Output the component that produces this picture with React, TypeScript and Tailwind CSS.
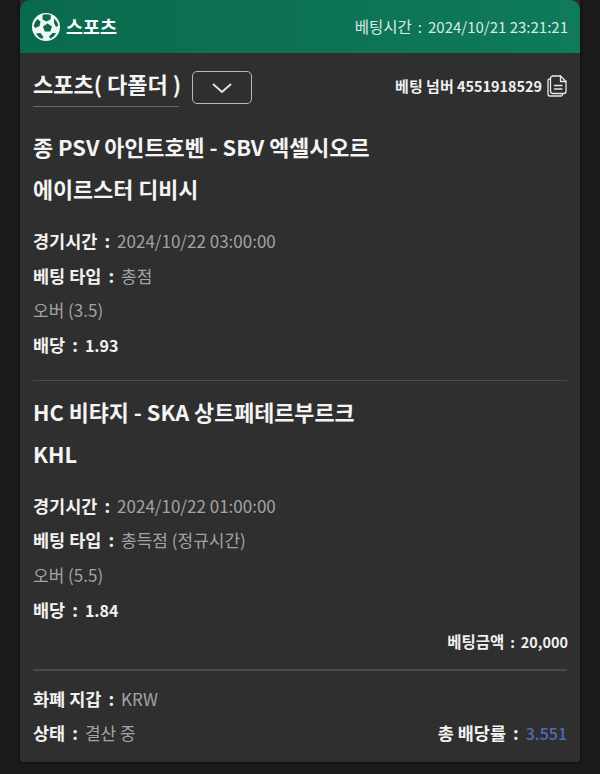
const font = "[font-family:'Noto_Sans_CJK_KR','Noto_Sans',sans-serif]";

function SoccerIcon() {
  return (
    <svg width="30" height="30" viewBox="0 0 30 30">
      <circle cx="15" cy="15" r="14" fill="#eef7f3" />
      <g fill="#0b6a4e">
        <polygon points="16.5,11.5 21,14.5 19.3,19.5 13.7,19.5 12,14.5" />
        <path d="M11.5 3 Q16 1.6 20 3.2 L19.5 7.5 L15.5 9.5 L11.5 7.5 Z" />
        <path d="M6.5 7 L9.5 9.5 L8.5 14 L4.5 16 L2.6 14 Q3 10 6.5 7 Z" />
        <path d="M23 6.5 Q26.5 9.5 27.4 13.5 L25 15 L23 11 Z" />
        <path d="M5 21.5 L9.5 21 L12.5 25 L11 27 Q7 25.5 5 21.5 Z" />
        <path d="M25 21 Q23.5 25 19.5 26.8 L18 24.5 L21.5 21 Z" />
      </g>
    </svg>
  );
}

function CopyIcon() {
  return (
    <svg width="20" height="22" viewBox="0 0 20 22" fill="none" stroke="#e8e8e8" strokeWidth="1.3" strokeLinejoin="round" strokeLinecap="round">
      <path d="M3.5 4 H2.5 A1.5 1.5 0 0 0 1 5.5 V19 A2 2 0 0 0 3 21 H14 A1.5 1.5 0 0 0 15.5 19.5" />
      <path d="M6 1 H13.5 L19 6.5 V16.5 A2 2 0 0 1 17 18.5 H6 A2.5 2.5 0 0 1 3.5 16 V3.5 A2.5 2.5 0 0 1 6 1 Z" />
      <path d="M13.5 1 V6.5 H19" />
      <path d="M7.5 10.5 H15 M7.5 14 H15" />
    </svg>
  );
}

function Row({ label, value, valueClass = "text-[17px] text-[#a3a3a3]" }: { label: string; value?: string; valueClass?: string }) {
  return (
    <div className="h-[34.67px] leading-[34.67px] text-[17.5px] whitespace-nowrap">
      <span className="font-bold text-[#f2f2f2]">{label}<span className="mx-[7px]">:</span></span>
      {value && <span className={valueClass}>{value}</span>}
    </div>
  );
}

function Game({ title, league, time, type, pick, odds }: { title: string; league: string; time: string; type: string; pick: string; odds: string }) {
  return (
    <div>
      <div className="text-[21.8px] font-semibold leading-[42px] text-[#f4f4f4] whitespace-nowrap">
        <div>{title}</div>
        <div>{league}</div>
      </div>
      <div className="mt-[14px]">
        <Row label="경기시간" value={time} />
        <Row label="베팅 타입" value={type} />
        <div className="h-[34.67px] leading-[34.67px] text-[17px] text-[#a3a3a3]">{pick}</div>
        <Row label="배당" value={odds} valueClass="text-[16px] font-bold text-[#f2f2f2]" />
      </div>
    </div>
  );
}

export default function App() {
  return (
    <div className={`${font} w-[600px] h-[774px] bg-[#1c1c1c] px-5 overflow-hidden`}>
      <div className="h-[762px] bg-[#2f2f2f] rounded-b-[3px] shadow-[0_0_6px_rgba(0,0,0,0.6)]">
        <div className="h-[53px] rounded-t-[10px] bg-gradient-to-r from-[#0a6a4d] to-[#0f7a5c] flex items-center justify-between pl-[11px] pr-3">
          <div className="flex items-center gap-[5px]">
            <SoccerIcon />
            <span className="text-[18.5px] font-bold text-white">스포츠</span>
          </div>
          <div className="text-[15px] text-[#d8ebe4]"><span className="text-[15.5px]">베팅시간</span><span className="mx-[6px]">:</span>2024/10/21 23:21:21</div>
        </div>

        <div className="px-[13px]">
          <div className="flex items-start justify-between pt-[14px]">
            <div className="flex items-start gap-[13px]">
              <div className="w-[146px] h-[40px] border-b border-[#6a6a6a] text-[22px] font-bold leading-[32px] text-[#f4f4f4] whitespace-nowrap">
                스포츠( 다폴더 )
              </div>
              <div className="w-[60px] h-[33px] mt-[4px] flex items-center justify-center rounded-[5px] border border-[#b8b8b8]">
                <svg width="22" height="12" viewBox="0 0 22 12" fill="none" stroke="#e4e4e4" strokeWidth="2">
                  <path d="M2 2 L11 10 L20 2" />
                </svg>
              </div>
            </div>
            <div className="flex items-center gap-[5px] mt-[8px] text-[15px] font-semibold text-[#f0f0f0]">
              <span>베팅 넘버 <span className="text-[14.4px]">4551918529</span></span>
              <CopyIcon />
            </div>
          </div>

          <div className="pt-[19px] pb-[17px] border-b border-[#4d4d4d]">
            <Game
              title="종 PSV 아인트호벤 - SBV 엑셀시오르"
              league="에이르스터 디비시"
              time="2024/10/22 03:00:00"
              type="총점"
              pick="오버 (3.5)"
              odds="1.93"
            />
          </div>

          <div className="pt-[10px]">
            <Game
              title="HC 비탸지 - SKA 상트페테르부르크"
              league="KHL"
              time="2024/10/22 01:00:00"
              type="총득점 (정규시간)"
              pick="오버 (5.5)"
              odds="1.84"
            />
          </div>

          <div className="text-right text-[14.4px] font-semibold text-[#f0f0f0] leading-[29px] mr-[-1px]"><span className="text-[15.5px]">베팅금액</span><span className="mx-[6px]">:</span>20,000</div>

          <div className="mt-[12.5px] border-t-2 border-[#4a4a4a] pt-[11px]">
            <Row label="화폐 지갑" value="KRW" />
            <div className="flex justify-between">
              <Row label="상태" value="결산 중" />
              <Row label="총 배당률" value="3.551" valueClass="text-[16px] text-[#4f6cb8] font-medium" />
            </div>
          </div>
        </div>
      </div>
    </div>
  );
}
